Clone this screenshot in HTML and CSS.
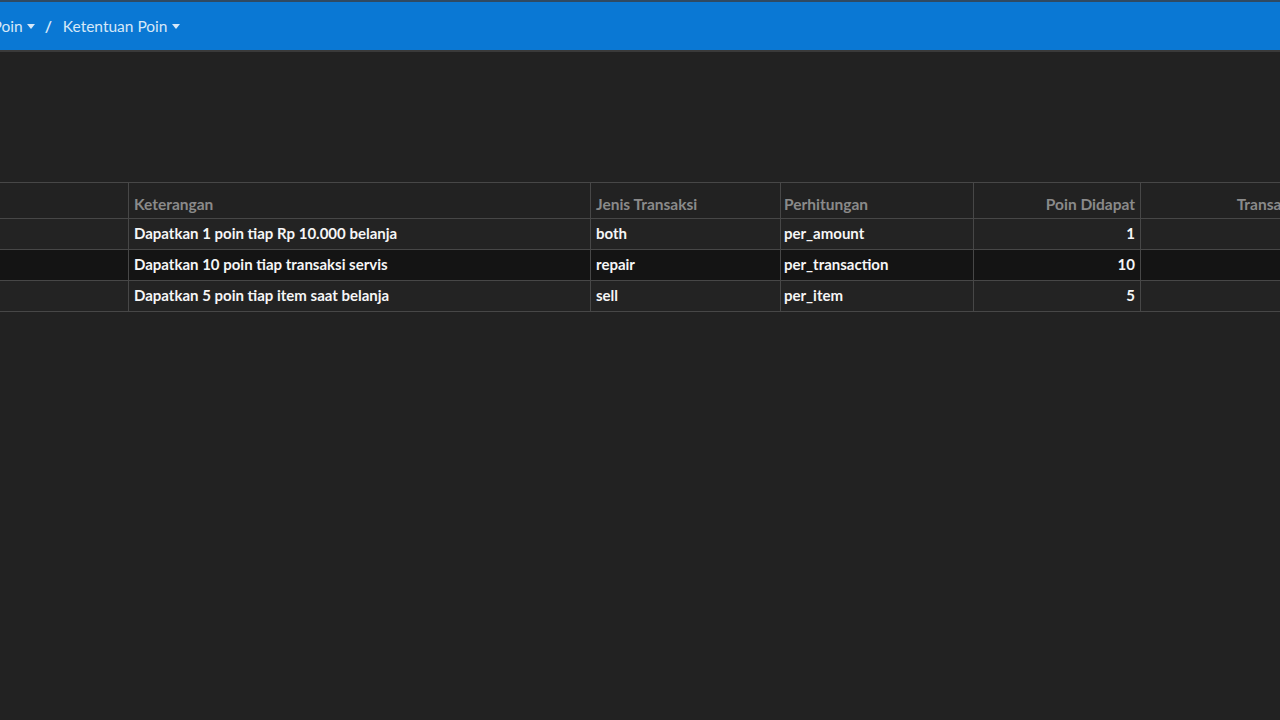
FILE: index.html
```html
<!DOCTYPE html>
<html lang="en">
<head>
    <meta charset="UTF-8">
    <meta name="viewport" content="width=device-width, initial-scale=1.0">
    <title>Ketentuan Poin</title>
    <link rel="stylesheet" href="styles.css">
</head>
<body>
<header class="topbar">
    <nav class="crumbs">
        <span class="crumb">Master Poin<span class="caret"></span></span>
        <span class="sep">/</span>
        <span class="crumb">Ketentuan Poin<span class="caret"></span></span>
    </nav>
</header>

<main class="content">
    <table class="rules">
        <colgroup>
            <col class="c-name">
            <col class="c-desc">
            <col class="c-type">
            <col class="c-calc">
            <col class="c-point">
            <col class="c-min">
        </colgroup>
        <thead>
        <tr>
            <th>Nama</th>
            <th>Keterangan</th>
            <th>Jenis Transaksi</th>
            <th>Perhitungan</th>
            <th class="num">Poin Didapat</th>
            <th class="num">Transaksi Minimum</th>
        </tr>
        </thead>
        <tbody>
        <tr>
            <td></td>
            <td>Dapatkan 1 poin tiap Rp 10.000 belanja</td>
            <td>both</td>
            <td>per_amount</td>
            <td class="num">1</td>
            <td class="num"></td>
        </tr>
        <tr class="alt">
            <td></td>
            <td>Dapatkan 10 poin tiap transaksi servis</td>
            <td>repair</td>
            <td>per_transaction</td>
            <td class="num">10</td>
            <td class="num"></td>
        </tr>
        <tr>
            <td></td>
            <td>Dapatkan 5 poin tiap item saat belanja</td>
            <td>sell</td>
            <td>per_item</td>
            <td class="num">5</td>
            <td class="num"></td>
        </tr>
        </tbody>
    </table>
</main>
</body>
</html>
```

FILE: styles.css
```css
html,
body {
    margin: 0;
    background-color: #222222;
    font-family: Lato, "Open Sans", sans-serif;
    overflow: hidden;
}

.topbar {
    height: 48px;
    background-color: #0a78d4;
    border-top: 2px solid #2f4a63;
    border-bottom: 2px solid #3a3a3a;
    display: flex;
    align-items: center;
    overflow: hidden;
}

.crumbs {
    display: flex;
    align-items: center;
    margin-left: -59px;
    color: #d6e8f8;
    font-size: 15.5px;
    font-weight: 400;
    white-space: nowrap;
}

.crumb {
    display: inline-flex;
    align-items: center;
}

.caret {
    display: inline-block;
    width: 0;
    height: 0;
    margin-left: 4px;
    border-left: 4.5px solid transparent;
    border-right: 4.5px solid transparent;
    border-top: 5px solid #d6e8f8;
}

.sep {
    margin: 0 11px 0 10px;
    font-weight: 700;
}

.content {
    padding-top: 130px;
    overflow: hidden;
}

.rules {
    border-collapse: collapse;
    table-layout: fixed;
    width: 1568px;
    margin-left: -100px;
    font-size: 15px;
    font-weight: 700;
    color: #f6f6f6;
}

.c-name { width: 228px; }
.c-desc { width: 462px; }
.c-type { width: 190px; }
.c-calc { width: 193px; }
.c-point { width: 167px; }
.c-min { width: 328px; }

.rules th,
.rules td {
    border: 1px solid #474747;
    padding: 0 5px;
    text-align: left;
    white-space: nowrap;
    overflow: hidden;
}

.rules th {
    height: 29px;
    padding-top: 6px;
    color: #8a8a8a;
    font-size: 15.5px;
    font-weight: 700;
}

.rules td {
    height: 28px;
    padding-bottom: 2px;
    background-color: #232323;
}

.rules td:nth-child(4),
.rules th:nth-child(4) {
    padding-left: 3px;
}

.rules tr.alt td {
    background-color: #141414;
}

.rules .num {
    text-align: right;
}

.rules th.num:last-child {
    padding-right: 98px;
}
```
